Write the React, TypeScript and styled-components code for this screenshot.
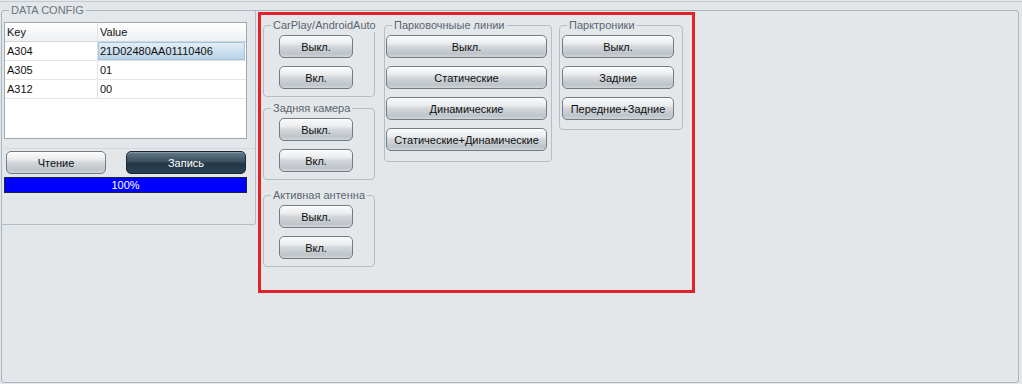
import React from 'react'
import styled, { createGlobalStyle } from 'styled-components'

const GlobalStyle = createGlobalStyle`
    body{
        margin: 0;
        background: #e3e7ea;
        font-family: "Liberation Sans", Arial, sans-serif;
        font-size: 11px;
    }
`

const Page = styled.div`
    width: 1022px;
    height: 384px;
    background: #e3e7ea;
    overflow: hidden;
`

const TopRule = styled.div`
    height: 1px;
    margin-top: 1px;
    background: #c3cbd3;
`

const Frame = styled.div`
    position: relative;
    margin: 8px 0 0 1px;
    width: 1018px;
    height: 373px;
    box-sizing: border-box;
    border: 1px solid #a9b5c1;
    border-radius: 3px;
    display: flex;
    align-items: flex-start;
`

const FrameTitle = styled.span`
    position: absolute;
    top: -7px;
    left: 7px;
    padding: 0 2px;
    background: #e3e7ea;
    line-height: 13px;
    color: #6b7580;
`

const LeftPanel = styled.div`
    width: 254px;
    height: 214px;
    box-sizing: border-box;
    padding: 11px 0 0 2px;
    border-right: 1px solid #b3bdc7;
    border-bottom: 1px solid #b3bdc7;
    border-bottom-right-radius: 3px;
`

const Table = styled.div`
    width: 243px;
    height: 117px;
    box-sizing: border-box;
    border: 1px solid #9ea8b2;
    background: #fff;
`

const TRow = styled.div<{ $head?: boolean }>`
    display: grid;
    grid-template-columns: 93px 1fr;
    height: 19px;
    box-sizing: border-box;
    border-bottom: 1px solid ${p => p.$head ? "#d3d8dd" : "#e4e6e8"};
    background: ${p => p.$head ? "linear-gradient(to bottom, #ffffff, #eef0f2)" : "#fff"};
`

const TCell = styled.div<{ $selected?: boolean }>`
    padding-left: 2px;
    line-height: 18px;
    color: #111;
    border-right: 1px solid #e1e4e7;
    white-space: nowrap;
    &:last-child{ border-right: none; }
    ${p => p.$selected && `
        margin-right: 1px;
        background: linear-gradient(to bottom, #e6f0f8, #b5d0e5);
        box-shadow: inset 0 0 0 1px #a2c3dc;
    `}
`

const ActionRow = styled.div`
    margin-top: 9px;
    border-top: 1px solid #d2d8de;
    padding: 2px 0 0 2px;
    display: flex;
    gap: 20px;
`

const Btn = styled.button<{ $w: number; $dark?: boolean }>`
    width: ${p => p.$w}px;
    height: 23px;
    box-sizing: border-box;
    padding: 0;
    border: 1px solid ${p => p.$dark ? "#1b2832" : "#737c85"};
    border-radius: 5px;
    font-family: "Liberation Sans", Arial, sans-serif;
    font-size: 11px;
    color: ${p => p.$dark ? "#fff" : "#111"};
    background: ${p => p.$dark
        ? "linear-gradient(to bottom, #62798a 0%, #3a5061 45%, #213646 55%, #2c4253 100%)"
        : "linear-gradient(to bottom, #fbfbfc 0%, #eaecee 35%, #d3d7db 50%, #bec4c9 85%, #d0d5d9 100%)"};
    box-shadow: inset 0 1px 0 ${p => p.$dark ? "rgba(255,255,255,0.25)" : "#fff"};
    white-space: nowrap;
`

const Progress = styled.div`
    margin-top: 3px;
    width: 243px;
    height: 16px;
    box-sizing: border-box;
    border: 1px solid #1c2340;
    background: #0000fe;
    color: #fff;
    text-align: center;
    line-height: 14px;
`

const Marked = styled.div`
    margin: 1px 0 0 2px;
    width: 437px;
    height: 281px;
    box-sizing: border-box;
    border: 3px solid #e1222b;
    padding: 4px 0 0 2px;
    display: flex;
    align-items: flex-start;
`

const Column = styled.div<{ $w: number; $ml: number }>`
    width: ${p => p.$w}px;
    margin-left: ${p => p.$ml}px;
    display: flex;
    flex-direction: column;
`

const Group = styled.fieldset<{ $mt?: number }>`
    margin: ${p => p.$mt ?? 0}px 0 0 0;
    padding: 0;
    min-width: 0;
    border: 1px solid #b5bec7;
    border-radius: 4px;
`

const Legend = styled.legend`
    margin-left: 7px;
    padding: 0 2px;
    line-height: 13px;
    color: #5b6570;
    white-space: nowrap;
`

const GroupBody = styled.div<{ $pl: number; $pb: number }>`
    display: flex;
    flex-direction: column;
    gap: 8px;
    padding: 3px 0 ${p => p.$pb}px ${p => p.$pl}px;
`

type GroupDef = { title: string; items: string[]; mt?: number }

const rows = [
    { key: "A304", value: "21D02480AA01110406", selected: true },
    { key: "A305", value: "01" },
    { key: "A312", value: "00" },
]

const columns: { w: number; ml: number; pl: number; pb: number; btn: number; groups: GroupDef[] }[] = [
    {
        w: 112, ml: 0, pl: 15, pb: 7, btn: 74,
        groups: [
            { title: "CarPlay/AndroidAuto", items: ["Выкл.", "Вкл."] },
            { title: "Задняя камера", items: ["Выкл.", "Вкл."], mt: 5 },
            { title: "Активная антенна", items: ["Выкл.", "Вкл."], mt: 9 },
        ]
    },
    {
        w: 168, ml: 9, pl: 1, pb: 10, btn: 161,
        groups: [
            { title: "Парковочныые линии", items: ["Выкл.", "Статические", "Динамические", "Статические+Динамические"] },
        ]
    },
    {
        w: 124, ml: 7, pl: 2, pb: 9, btn: 112,
        groups: [
            { title: "Парктроники", items: ["Выкл.", "Задние", "Передние+Задние"] },
        ]
    },
]

const App: React.FC = () => {
    return (
        <>
            <GlobalStyle />
            <Page>
                <TopRule />
                <Frame>
                    <FrameTitle>DATA CONFIG</FrameTitle>
                    <LeftPanel>
                        <Table>
                            <TRow $head>
                                <TCell>Key</TCell>
                                <TCell>Value</TCell>
                            </TRow>
                            {rows.map(r => (
                                <TRow key={r.key}>
                                    <TCell>{r.key}</TCell>
                                    <TCell $selected={r.selected}>{r.value}</TCell>
                                </TRow>
                            ))}
                        </Table>
                        <ActionRow>
                            <Btn $w={100}>Чтение</Btn>
                            <Btn $w={120} $dark>Запись</Btn>
                        </ActionRow>
                        <Progress>100%</Progress>
                    </LeftPanel>
                    <Marked>
                        {columns.map((col, ci) => (
                            <Column key={ci} $w={col.w} $ml={col.ml}>
                                {col.groups.map(g => (
                                    <Group key={g.title} $mt={g.mt}>
                                        <Legend>{g.title}</Legend>
                                        <GroupBody $pl={col.pl} $pb={col.pb}>
                                            {g.items.map(item => (
                                                <Btn key={item} $w={col.btn}>{item}</Btn>
                                            ))}
                                        </GroupBody>
                                    </Group>
                                ))}
                            </Column>
                        ))}
                    </Marked>
                </Frame>
            </Page>
        </>
    )
}

export default App
